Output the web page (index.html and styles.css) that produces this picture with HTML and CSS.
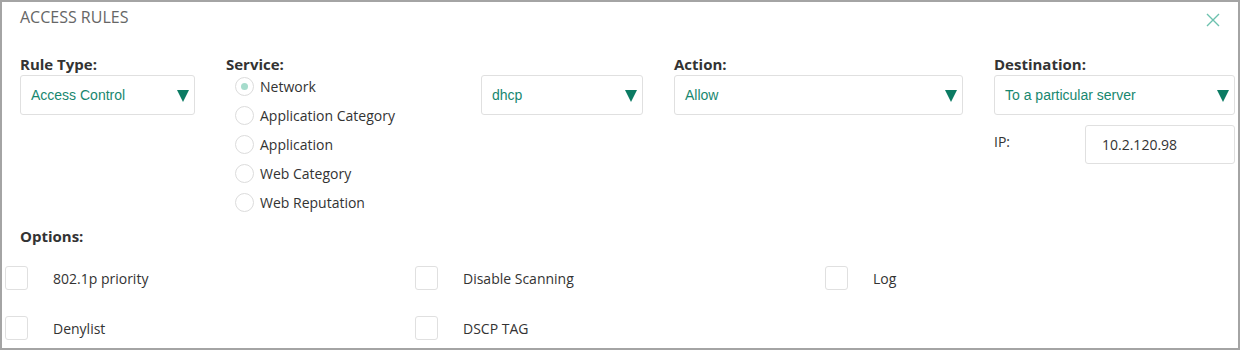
FILE: index.html
```html
<!DOCTYPE html>
<html lang="en">
<head>
  <meta charset="UTF-8">
  <title>Access Rules</title>
  <link rel="stylesheet" href="styles.css">
</head>
<body>

  <div class="modal">
    <!-- header -->
    <div class="modal-head">
      <h2 class="modal-title">Access Rules</h2>
      <button class="close-btn" aria-label="Close">
        <svg width="14" height="14" viewBox="0 0 14 14">
          <path d="M1 1L13 13M13 1L1 13" stroke="#6cc1ae" stroke-width="1.4" fill="none"/>
        </svg>
      </button>
    </div>

    <!-- rule fields -->
    <div class="fields">
      <div class="field">
        <label class="field-label">Rule Type:</label>
        <div class="select"><span>Access Control</span><i class="arrow"></i></div>
      </div>

      <div class="field">
        <label class="field-label">Service:</label>
        <div class="radios">
          <label class="radio"><span class="dot checked"></span>Network</label>
          <label class="radio"><span class="dot"></span>Application Category</label>
          <label class="radio"><span class="dot"></span>Application</label>
          <label class="radio"><span class="dot"></span>Web Category</label>
          <label class="radio"><span class="dot"></span>Web Reputation</label>
        </div>
      </div>

      <div class="field no-label">
        <div class="select"><span>dhcp</span><i class="arrow"></i></div>
      </div>

      <div class="field">
        <label class="field-label">Action:</label>
        <div class="select"><span>Allow</span><i class="arrow"></i></div>
      </div>

      <div class="field">
        <label class="field-label">Destination:</label>
        <div class="select"><span>To a particular server</span><i class="arrow"></i></div>
        <div class="ip-row">
          <span class="ip-label">IP:</span>
          <input class="ip-input" type="text" value="10.2.120.98">
        </div>
      </div>
    </div>

    <!-- options -->
    <label class="field-label options-label">Options:</label>
    <div class="options">
      <label class="check"><span class="box"></span>802.1p priority</label>
      <label class="check"><span class="box"></span>Disable Scanning</label>
      <label class="check"><span class="box"></span>Log</label>
      <label class="check"><span class="box"></span>Denylist</label>
      <label class="check"><span class="box"></span>DSCP TAG</label>
    </div>
  </div>

</body>
</html>
```

FILE: styles.css
```css
body {
  margin: 0;
  font-family: 'Open Sans', sans-serif;
  font-size: 14px;
  color: #333;
  background: #fff;
}

.modal {
  box-sizing: border-box;
  width: 1240px;
  height: 350px;
  border: 2px solid #a4a4a4;
  padding: 5px 3px 0 18px;
  overflow: hidden;
}

.modal-head {
  display: flex;
  justify-content: space-between;
  align-items: flex-start;
}

.modal-title {
  margin: 0;
  font-size: 16px;
  font-weight: 400;
  line-height: 20px;
  text-transform: uppercase;
  color: #666;
}

.close-btn {
  background: none;
  border: none;
  padding: 0;
  margin: 6px 15px 0 0;
  width: 14px;
  height: 14px;
  cursor: pointer;
}

.close-btn svg {
  display: block;
}

.fields {
  display: grid;
  grid-template-columns: 175px 224px 162px 289px 241px;
  column-gap: 31px;
  margin-top: 28px;
}

.field {
  display: flex;
  flex-direction: column;
}

.field-label {
  display: block;
  font-size: 15px;
  font-weight: 700;
  line-height: 18px;
  color: #333;
}

.no-label {
  padding-top: 18px;
}

.select {
  box-sizing: border-box;
  height: 40px;
  margin-top: 2px;
  border: 1px solid #e0e0e0;
  border-radius: 3px;
  padding: 0 5px 0 10px;
  display: flex;
  align-items: center;
  justify-content: space-between;
  font-family: 'Liberation Sans', Arial, sans-serif;
  font-size: 14px;
  color: #17876f;
}

.arrow {
  width: 0;
  height: 0;
  border-left: 6px solid transparent;
  border-right: 6px solid transparent;
  border-top: 12px solid #0b7b63;
  margin-top: 1px;
}

.radios {
  margin-top: -1px;
  padding-left: 9px;
}

.radio {
  display: flex;
  align-items: center;
  height: 29px;
  gap: 6px;
  color: #333;
}

.dot {
  box-sizing: border-box;
  width: 19px;
  height: 19px;
  border: 1px solid #dcdcdc;
  border-radius: 50%;
  display: flex;
  align-items: center;
  justify-content: center;
}

.dot.checked::after {
  content: "";
  width: 7px;
  height: 7px;
  border-radius: 50%;
  background: #a6dccc;
}

.ip-row {
  display: flex;
  justify-content: space-between;
  align-items: flex-start;
  margin-top: 10px;
}

.ip-label {
  padding-top: 7px;
  line-height: 20px;
}

.ip-input {
  box-sizing: border-box;
  width: 150px;
  height: 39px;
  border: 1px solid #e0e0e0;
  border-radius: 3px;
  padding: 0 0 0 16px;
  font-family: 'Open Sans', sans-serif;
  font-size: 14px;
  color: #333;
  outline: none;
}

.options-label {
  margin-top: 10px;
}

.options {
  display: grid;
  grid-template-columns: repeat(3, 410px);
  margin: 8px 0 0 -15px;
}

.check {
  display: flex;
  align-items: center;
  height: 50px;
  gap: 25px;
  color: #333;
}

.box {
  box-sizing: border-box;
  width: 23px;
  height: 24px;
  border: 1px solid #e0e0e0;
  border-radius: 3px;
}
```
